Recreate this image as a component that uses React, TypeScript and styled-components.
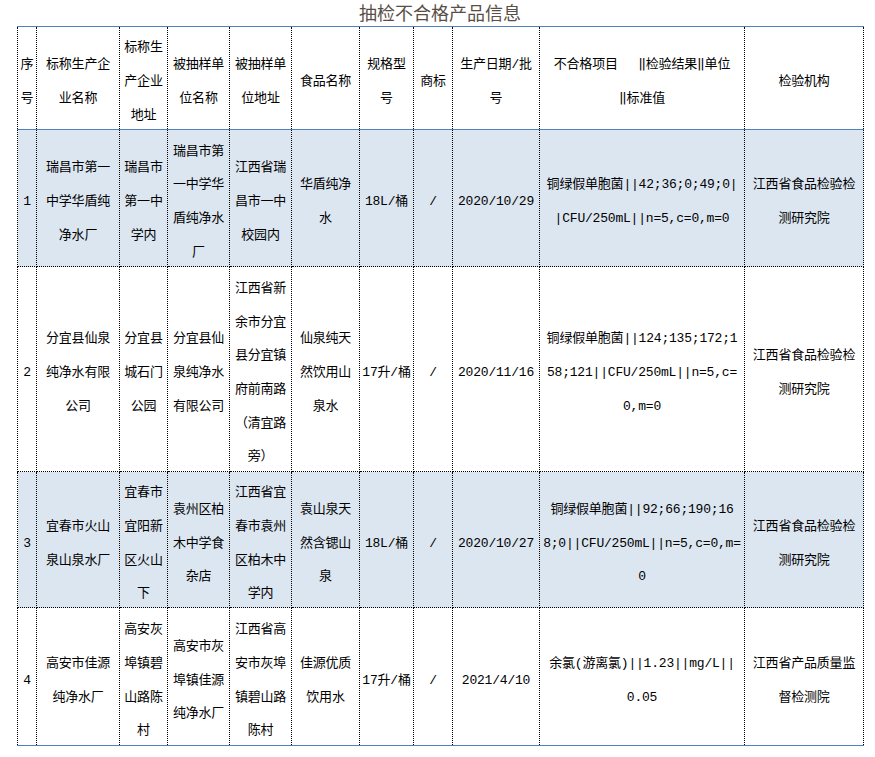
import React from "react";
import styled, { createGlobalStyle } from "styled-components";

const GlobalStyle = createGlobalStyle`
  html, body { margin: 0; padding: 0; background: #ffffff; }
`;

const Page = styled.div`
  width: 875px;
  box-sizing: border-box;
  padding: 0 0 0 17px;
`;

const Title = styled.h1`
  margin: 0;
  width: 846px;
  height: 26px;
  line-height: 24px;
  text-align: center;
  font-family: "Noto Sans CJK SC", "Noto Sans", sans-serif;
  font-size: 18px;
  font-weight: 400;
  color: #584e45;
`;

const Table = styled.table`
  border-collapse: collapse;
  table-layout: fixed;
  width: 846px;
  font-family: "Liberation Mono", "DejaVu Sans Mono", "Noto Sans CJK SC", monospace;
  font-size: 13px;
  letter-spacing: -0.2px;
  color: #000;
`;

const HeadRow = styled.tr`
  height: 103px;
  background: #ffffff;
`;

const BodyRow = styled.tr<{ $shaded: boolean; $h: number }>`
  height: ${(p) => p.$h}px;
  background: ${(p) => (p.$shaded ? "#dce6f1" : "#ffffff")};
  &:last-child td {
    border-bottom: 1px solid #4f81bd;
  }
`;

const cellBase = `
  border-left: 1px dotted #000;
  border-right: 1px dotted #000;
  padding: 0;
  vertical-align: middle;
  text-align: center;
  white-space: nowrap;
  overflow: visible;
`;

const HeadCell = styled.th`
  ${cellBase}
  font-weight: 400;
  border-top: 1px solid #4f81bd;
  border-bottom: 1px solid #4f81bd;
`;

const Cell = styled.td`
  ${cellBase}
  border-bottom: 1px dotted #000;
`;

const Line = styled.span`
  display: block;
  white-space: pre;
  padding-top: 9px;
  line-height: 24.7px;
`;

const widths = [19, 83, 48, 62, 62, 68, 54, 39, 87, 205, 119];

const header: string[][] = [
  ["序", "号"],
  ["标称生产企", "业名称"],
  ["标称生", "产企业", "地址"],
  ["被抽样单", "位名称"],
  ["被抽样单", "位地址"],
  ["食品名称"],
  ["规格型", "号"],
  ["商标"],
  ["生产日期/批", "号"],
  ["不合格项目　 ‖检验结果‖单位", "‖标准值"],
  ["检验机构"],
];

type Row = { h: number; shaded: boolean; cells: string[][] };

const rows: Row[] = [
  {
    h: 137,
    shaded: true,
    cells: [
      ["1"],
      ["瑞昌市第一", "中学华盾纯", "净水厂"],
      ["瑞昌市", "第一中", "学内"],
      ["瑞昌市第", "一中学华", "盾纯净水", "厂"],
      ["江西省瑞", "昌市一中", "校园内"],
      ["华盾纯净", "水"],
      ["18L/桶"],
      ["/"],
      ["2020/10/29"],
      ["铜绿假单胞菌||42;36;0;49;0|", "|CFU/250mL||n=5,c=0,m=0"],
      ["江西省食品检验检", "测研究院"],
    ],
  },
  {
    h: 205,
    shaded: false,
    cells: [
      ["2"],
      ["分宜县仙泉", "纯净水有限", "公司"],
      ["分宜县", "城石门", "公园"],
      ["分宜县仙", "泉纯净水", "有限公司"],
      ["江西省新", "余市分宜", "县分宜镇", "府前南路", "（清宜路", "旁）"],
      ["仙泉纯天", "然饮用山", "泉水"],
      ["17升/桶"],
      ["/"],
      ["2020/11/16"],
      ["铜绿假单胞菌||124;135;172;1", "58;121||CFU/250mL||n=5,c=", "0,m=0"],
      ["江西省食品检验检", "测研究院"],
    ],
  },
  {
    h: 136,
    shaded: true,
    cells: [
      ["3"],
      ["宜春市火山", "泉山泉水厂"],
      ["宜春市", "宜阳新", "区火山", "下"],
      ["袁州区柏", "木中学食", "杂店"],
      ["江西省宜", "春市袁州", "区柏木中", "学内"],
      ["袁山泉天", "然含锶山", "泉"],
      ["18L/桶"],
      ["/"],
      ["2020/10/27"],
      ["铜绿假单胞菌||92;66;190;16", "8;0||CFU/250mL||n=5,c=0,m=", "0"],
      ["江西省食品检验检", "测研究院"],
    ],
  },
  {
    h: 138,
    shaded: false,
    cells: [
      ["4"],
      ["高安市佳源", "纯净水厂"],
      ["高安灰", "埠镇碧", "山路陈", "村"],
      ["高安市灰", "埠镇佳源", "纯净水厂"],
      ["江西省高", "安市灰埠", "镇碧山路", "陈村"],
      ["佳源优质", "饮用水"],
      ["17升/桶"],
      ["/"],
      ["2021/4/10"],
      ["余氯(游离氯)||1.23||mg/L||", "0.05"],
      ["江西省产品质量监", "督检测院"],
    ],
  },
];

const Lines = ({ lines }: { lines: string[] }) => (
  <>
    {lines.map((l, i) => (
      <Line key={i}>{l}</Line>
    ))}
  </>
);

export default function App() {
  return (
    <>
      <GlobalStyle />
      <Page>
        <Title>抽检不合格产品信息</Title>
        <Table>
          <colgroup>
            {widths.map((w, i) => (
              <col key={i} style={{ width: w }} />
            ))}
          </colgroup>
          <thead>
            <HeadRow>
              {header.map((lines, i) => (
                <HeadCell key={i}>
                  <Lines lines={lines} />
                </HeadCell>
              ))}
            </HeadRow>
          </thead>
          <tbody>
            {rows.map((r, ri) => (
              <BodyRow key={ri} $shaded={r.shaded} $h={r.h}>
                {r.cells.map((lines, ci) => (
                  <Cell key={ci}>
                    <Lines lines={lines} />
                  </Cell>
                ))}
              </BodyRow>
            ))}
          </tbody>
        </Table>
      </Page>
    </>
  );
}
